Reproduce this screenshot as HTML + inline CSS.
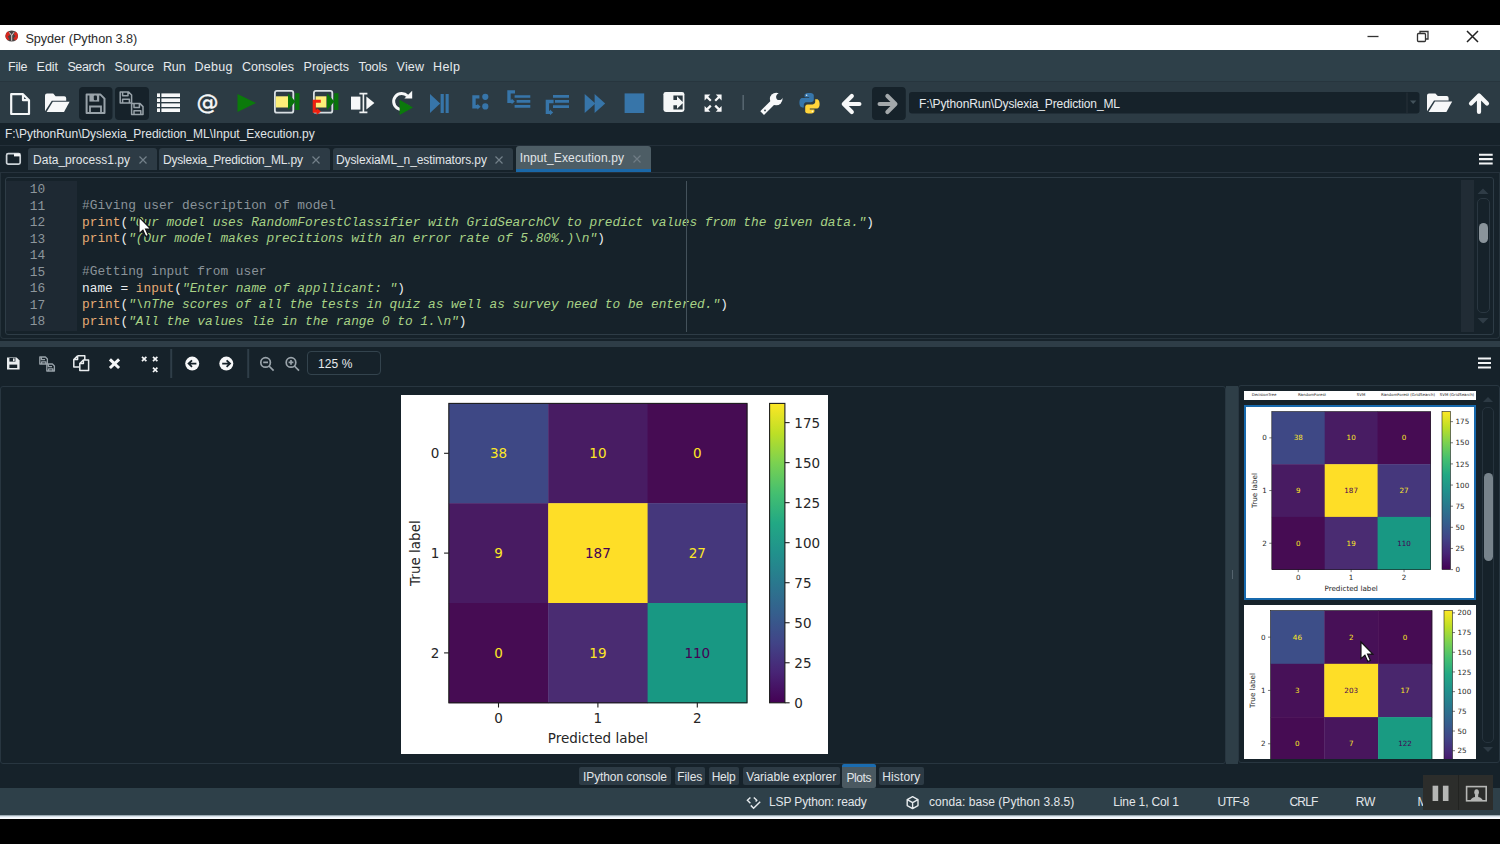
<!DOCTYPE html>
<html>
<head>
<meta charset="utf-8">
<title>Spyder (Python 3.8)</title>
<style>
*{box-sizing:border-box;margin:0;padding:0}
html,body{width:1500px;height:844px;overflow:hidden;background:#000;font-family:"Liberation Sans","DejaVu Sans",sans-serif;}
.abs{position:absolute}
#root{position:absolute;left:0;top:0;width:1500px;height:844px;background:#000;overflow:hidden}
.t{position:absolute;white-space:pre;line-height:16px;height:16px}
#title{left:0;top:25px;width:1500px;height:25px;background:#fff;color:#2b2b2b;font-size:12.7px}
#menu{left:0;top:50px;width:1500px;height:32px;background:#2e4049;color:#e6eaed;font-size:12.5px;border-bottom:1px solid #27353e}
#tool{left:0;top:82px;width:1500px;height:41px;background:#2c3b44}
#path{left:0;top:123px;width:1500px;height:23px;background:#16222a;color:#e0e5e8;font-size:12px}
#tabs{left:0;top:146px;width:1500px;height:30px;background:#16222a}
.tab{position:absolute;top:2px;height:22px;background:#2d3b45;color:#e2e6e9;font-size:12px;border-radius:3px 3px 0 0}
.tab .x{position:absolute;top:5px;width:10px;height:10px}
#editor{left:5px;top:177px;width:1489px;height:158px;background:#16222a;border:1px solid #2e3c46;border-radius:3px}
#gutter{left:0;top:3px;width:71px;height:150px;background:#1e2933}
.ln{position:absolute;left:0;width:39.2px;text-align:right;color:#8d969c;font-family:"Liberation Mono","DejaVu Sans Mono",monospace;font-size:12.8px;white-space:pre;line-height:16px;height:16px}
.code{position:absolute;left:76px;font-family:"Liberation Mono","DejaVu Sans Mono",monospace;font-size:12.82px;white-space:pre;color:#e9edef;line-height:16px;height:16px}
.cm{color:#8a9399}
.fn{color:#e6ab74}
.st{color:#a8d386;font-style:italic}
#split{left:0;top:341px;width:1500px;height:6px;background:#2e3d47}
#ptool{left:0;top:347px;width:1500px;height:38px;background:#16222a}
#plots{left:0;top:385px;width:1500px;height:380px;background:#16222a}
#btabs{left:0;top:765px;width:1500px;height:23px;background:#16222a}
.bt{position:absolute;top:2px;height:18px;background:#2d3b45;color:#e2e6e9;font-size:12px;border-radius:2px}
#status{left:0;top:788px;width:1500px;height:27px;background:#2e4049;color:#e2e6e9;font-size:12px}
#stripe{left:0;top:815px;width:1500px;height:4px;background:linear-gradient(#7f9098,#e9f1f9 45%,#ffffff)}
svg{position:absolute;overflow:visible}
svg text{font-family:"DejaVu Sans","Liberation Sans",sans-serif}
</style>
</head>
<body>
<div id="root">

<div class="abs" style="left:0;top:50px;width:1500px;height:765px;background:#16222a"></div>
<div id="title" class="abs">
<svg style="left:4.8px;top:5.4px" width="13.4" height="12" viewBox="0 0 13.4 12"><ellipse cx="6.7" cy="6" rx="6.3" ry="5.6" fill="#4a4444"/><path d="M0.4 6 A6.3 5.6 0 0 1 3.2 1.3 L5.4 4.6 L2.8 6.4 L4.6 9.6 L2.6 10.3 A6.3 5.6 0 0 1 0.4 6z" fill="#d8281f"/><path d="M13 6 A6.3 5.6 0 0 0 10.6 1.6 L8.6 4.2 L10.6 6 L8.4 8.6 L10.4 10.6 A6.3 5.6 0 0 0 13 6z" fill="#d8281f"/><path d="M4.4 2.4 L6.7 5.6 L9 2.2 M6.7 5.6 V10.8" stroke="#e8e0e0" stroke-width="0.9" fill="none"/></svg>
<span class="t" style="letter-spacing:-0.05px;left:25.4px;top:6px">Spyder (Python 3.8)</span>
<svg style="left:1360px;top:0" width="140" height="25" viewBox="0 0 140 25"><path d="M7.5 11.5 H18.5" stroke="#333" stroke-width="1.3"/><rect x="57.5" y="8.5" width="8" height="8" fill="none" stroke="#333" stroke-width="1.3" rx="1"/><path d="M60 8.5 V6.5 H68 V14 H65.5" fill="none" stroke="#333" stroke-width="1.3"/><path d="M107 6 L118 17 M118 6 L107 17" stroke="#222" stroke-width="1.5"/></svg>
</div>
<div id="menu" class="abs">
<span class="t" style="letter-spacing:-0.19px;left:8px;top:9px">File</span>
<span class="t" style="letter-spacing:-0.05px;left:36.6px;top:9px">Edit</span>
<span class="t" style="letter-spacing:-0.40px;left:67.4px;top:9px">Search</span>
<span class="t" style="letter-spacing:-0.00px;left:114.4px;top:9px">Source</span>
<span class="t" style="letter-spacing:-0.17px;left:163px;top:9px">Run</span>
<span class="t" style="letter-spacing:0.24px;left:194.6px;top:9px">Debug</span>
<span class="t" style="letter-spacing:-0.02px;left:242px;top:9px">Consoles</span>
<span class="t" style="letter-spacing:0.03px;left:303.6px;top:9px">Projects</span>
<span class="t" style="letter-spacing:-0.10px;left:358.6px;top:9px">Tools</span>
<span class="t" style="letter-spacing:0.17px;left:396.6px;top:9px">View</span>
<span class="t" style="letter-spacing:0.43px;left:433px;top:9px">Help</span>
</div>
<div id="tool" class="abs">
<svg style="left:0;top:0" width="1500" height="41" viewBox="0 0 1500 41">
<!-- new file -->
<path d="M11.2 12.2 H23 L29 18.2 V32 H11.2 Z M23 12.2 V18.2 H29" fill="none" stroke="#f4f6f7" stroke-width="2.2" stroke-linejoin="round"/>
<!-- open folder -->
<path d="M45 13.6 q0 -2 2 -2 h6.2 l2.4 2.6 h8.6 q2 0 2 2 v2.6 H51.8 L45 29.2z" fill="#f7f8f9"/>
<path d="M52.8 19.7 H69.6 L64 30 H46.6z" fill="#f7f8f9"/>
<!-- save (disabled) -->
<rect x="79" y="5" width="33.5" height="33" rx="4" fill="#16222a"/>
<path d="M86.6 12.6 H100.5 L104.5 16.6 V31 H86.6 Z" fill="none" stroke="#98a2a9" stroke-width="2" stroke-linejoin="round"/>
<rect x="89.4" y="12.6" width="9.8" height="7" fill="#98a2a9"/><rect x="93.8" y="13.4" width="3.2" height="4.8" rx="1" fill="#16222a"/>
<path d="M90 31 V24.5 H101 V31" fill="none" stroke="#98a2a9" stroke-width="1.8"/>
<!-- save all (disabled) -->
<rect x="115" y="5" width="34" height="33" rx="4" fill="#16222a"/>
<g fill="none" stroke="#98a2a9" stroke-width="1.5" stroke-linejoin="round">
<path d="M120.2 10 H128.6 L131.6 13 V21 H120.2 Z M122.6 10.4 V13.8 H128 V10.4 M122.6 21 V17.2 H129.4 V21"/>
<path d="M131.6 21.6 H140 L143 24.6 V32.6 H131.6 Z M134 22 V25.4 H139.4 V22 M134 32.6 V28.8 H140.8 V32.6"/>
</g>
<!-- list -->
<g fill="#f7f8f9">
<rect x="157" y="11.4" width="3" height="3.6"/><rect x="161.4" y="11.4" width="18.6" height="3.6"/>
<rect x="157" y="16.4" width="3" height="3.6"/><rect x="161.4" y="16.4" width="18.6" height="3.6"/>
<rect x="157" y="21.4" width="3" height="3.6"/><rect x="161.4" y="21.4" width="18.6" height="3.6"/>
<rect x="157" y="26.4" width="3" height="3.6"/><rect x="161.4" y="26.4" width="18.6" height="3.6"/>
</g>
<!-- @ -->
<text x="207.5" y="27.6" font-size="22" fill="#f7f8f9" stroke="#f7f8f9" stroke-width="0.4" text-anchor="middle" style="font-family:'DejaVu Sans','Liberation Sans',sans-serif">@</text>
<!-- run -->
<path d="M237.5 12 L256 21 L237.5 30z" fill="#0b7a0b"/>
<!-- run cell -->
<rect x="274.9" y="8.9" width="18.4" height="21.8" rx="2" fill="none" stroke="#d9dfe3" stroke-width="1.8"/>
<rect x="275.8" y="14.3" width="12.4" height="11.2" fill="#fdef78"/>
<path d="M288 11.2 L295.4 19.6 L288 28z" fill="#08740a"/><rect x="295.2" y="11.2" width="4.2" height="16.8" fill="#08740a"/>
<!-- run cell and advance -->
<rect x="313.9" y="8.9" width="18.4" height="21.8" rx="2" fill="none" stroke="#d9dfe3" stroke-width="1.8"/>
<rect x="315.6" y="14.3" width="10.8" height="11.2" fill="#fdef78"/>
<path d="M327 11.2 L334.4 19.6 L327 28z" fill="#08740a"/><rect x="334.2" y="11.2" width="4.2" height="16.8" fill="#08740a"/>
<path d="M320.8 19.2 H314.2 V29.2 H318" fill="none" stroke="#f0200f" stroke-width="3"/>
<path d="M316.6 26 L321 29.4 L316.6 33z" fill="#f0200f"/>
<!-- run selection -->
<rect x="351" y="14.6" width="9.4" height="13" fill="#f7f8f9"/>
<path d="M359.4 11.6 H367.4 M359.4 30.4 H367.4 M363.4 11.6 V30.4" stroke="#f0f2f3" stroke-width="1.6"/>
<path d="M366.4 14.6 L374.4 21 L366.4 27.6z" fill="#f7f8f9"/>
<!-- re-run -->
<path d="M407.5 14 A8 8 0 1 0 408.6 23.5" fill="none" stroke="#f7f8f9" stroke-width="3"/>
<path d="M404.4 16.6 H412.2 V8.8z" fill="#f7f8f9"/>
<path d="M399.6 17.8 L413 25.4 L399.6 33z" fill="#0b7a0b"/>
<!-- debug -->
<g fill="#3775a9">
<path d="M430 12 L440.2 21.5 L430 31z"/><rect x="440.6" y="12" width="3.2" height="19"/><rect x="445.6" y="12" width="3.1" height="19"/>
<!-- step -->
<circle cx="485.3" cy="14.8" r="3.1"/><circle cx="485.3" cy="24.4" r="3.1"/>
<path d="M477.4 21.8 L480.6 24.7 L477.4 27.6z"/>
<!-- continue -->
<path d="M584.7 12 L595.4 21.5 L584.7 31z"/><path d="M594.6 12 L605.2 21.5 L594.6 31z"/>
<!-- stop -->
<rect x="624.6" y="11.4" width="19.6" height="19.6"/>
<!-- step in arrowhead -->
<path d="M511.6 16.6 L514.8 19.4 L511.6 22.2z"/>
<!-- step out arrowhead -->
<path d="M550 27.6 L553.2 30.4 L550 33.2z"/>
</g>
<g fill="none" stroke="#3775a9" stroke-width="3.4">
<path d="M479.4 14.9 H474 V24.7 H478"/>
<path d="M515 9.9 H509 V19.4 H512"/>
<path d="M553.6 19.5 H547.4 V30.4 H550.4"/>
<path d="M514.6 14.5 H530.3 M516.6 19.3 H530.3 M514.6 24.4 H530.3" stroke-width="2.7"/>
<path d="M553 14.3 H569 M555 19.3 H569 M553 24.6 H569" stroke-width="2.7"/>
</g>
<!-- maximize pane -->
<rect x="663.4" y="9.9" width="21" height="20" rx="2.4" fill="#f4f6f7"/>
<path d="M673.4 13.6 H682.7 V20 L677 14.3 V18 H673.4z M673.4 27.4 H682.7 V21.2 L677 26.8 V23.2 H673.4z" fill="#2a3840"/>
<!-- fullscreen -->
<g stroke="#f7f8f9" stroke-width="2.2" fill="#f7f8f9" stroke-linejoin="miter">
<path d="M706 14 L710.8 18.8 M720 14 L715.2 18.8 M706 28.4 L710.8 23.6 M720 28.4 L715.2 23.6" fill="none"/>
<path d="M704.6 12.6 H710.4 L704.6 18.4z M721.6 12.6 H715.8 L721.6 18.4z M704.6 29.8 H710.4 L704.6 24z M721.6 29.8 H715.8 L721.6 24z" stroke="none"/>
</g>
<!-- separator -->
<path d="M743.2 13 V28" stroke="#55646e" stroke-width="1.6"/>
<!-- wrench -->
<path d="M764 29.2 L772.8 20.4" stroke="#f7f8f9" stroke-width="5.2" stroke-linecap="square"/>
<circle cx="776.2" cy="17" r="6.3" fill="#f7f8f9"/>
<circle cx="779.2" cy="15" r="3.1" fill="#2c3b44"/>
<path d="M777 12.8 L781.4 17.2 L786 12.6 L781.6 8.2z" fill="#2c3b44"/>
<circle cx="765" cy="28.4" r="0.9" fill="#2c3b44"/>
<!-- python -->
<path d="M809 11 c-4.6 0 -4.4 2 -4.4 2 v2.2 h4.6 v0.8 h-6.6 s-3.2 -0.4 -3.2 4.6 s2.8 4.8 2.8 4.8 h1.6 v-2.4 s-0.1 -2.8 2.8 -2.8 h4.6 s2.6 0 2.6 -2.6 v-4.2 s0.4 -2.4 -4.8 -2.4z" fill="#3776ab"/>
<path d="M810 31.6 c4.6 0 4.4 -2 4.4 -2 v-2.2 h-4.6 v-0.8 h6.6 s3.2 0.4 3.2 -4.6 s-2.8 -4.8 -2.8 -4.8 h-1.6 v2.4 s0.1 2.8 -2.8 2.8 h-4.6 s-2.6 0 -2.6 2.6 v4.2 s-0.4 2.4 4.8 2.4z" fill="#ffd43b"/>
<circle cx="806.6" cy="13.2" r="0.8" fill="#e6eef5"/><circle cx="812.4" cy="29.4" r="0.8" fill="#fff6d0"/>
<!-- back -->
<path d="M859.4 22 H845 M851.8 14 L843.8 22 L851.8 30" fill="none" stroke="#f7f8f9" stroke-width="4.2" stroke-linecap="round" stroke-linejoin="round"/>
<!-- forward (disabled) -->
<rect x="872" y="5" width="33.8" height="33" rx="4" fill="#16222a"/>
<path d="M879.6 22 H894 M887.4 14 L895.4 22 L887.4 30" fill="none" stroke="#a3a8ab" stroke-width="4.2" stroke-linecap="round" stroke-linejoin="round"/>
<!-- combobox -->
<rect x="909" y="10" width="510.5" height="21.6" rx="3" fill="#16222a"/>
<path d="M1407 10.5 V31" stroke="#263139" stroke-width="1"/>
<path d="M1410 18.4 H1416.4 L1413.2 22z" fill="#43525b"/>
<text x="919" y="26" font-size="12" fill="#e6eaed" textLength="201" lengthAdjust="spacing" style="font-family:'Liberation Sans',sans-serif">F:\PythonRun\Dyslexia_Prediction_ML</text>
<!-- folder -->
<path d="M1427 13.4 q0 -2 2 -2 h6.4 l2.4 2.6 h8.8 q2 0 2 2 v2.6 H1434 L1427 29.2z" fill="#f7f8f9"/>
<path d="M1435 19.5 H1452.2 L1446.4 30 H1428.6z" fill="#f7f8f9"/>
<!-- up -->
<path d="M1479 30 V15 M1471 21.6 L1479 13.6 L1487 21.6" fill="none" stroke="#f7f8f9" stroke-width="4.2" stroke-linecap="round" stroke-linejoin="round"/>
</svg>

</div>
<div id="path" class="abs"><span class="t" style="letter-spacing:-0.02px;left:5px;top:3px">F:\PythonRun\Dyslexia_Prediction_ML\Input_Execution.py</span></div>
<div id="tabs" class="abs">
<svg style="left:4px;top:6px" width="20" height="14" viewBox="0 0 20 14"><rect x="2.6" y="1.6" width="13.6" height="10.6" rx="1.6" fill="none" stroke="#ccd3d8" stroke-width="1.7"/><path d="M10 1.6 h6 v2.8 h-6z" fill="#f4f6f7"/></svg>
<div class="tab" style="left:28px;width:129px"><span class="t" style="letter-spacing:0.02px;left:5px;top:4px">Data_process1.py</span><svg class="x" style="left:110px;top:6.5px" viewBox="0 0 10 10"><path d="M1.5 1.5 L8.5 8.5 M8.5 1.5 L1.5 8.5" stroke="#73808a" stroke-width="1.2"/></svg></div>
<div class="tab" style="left:159px;width:171px"><span class="t" style="letter-spacing:-0.20px;left:4px;top:4px">Dyslexia_Prediction_ML.py</span><svg class="x" style="left:152px;top:6.5px" viewBox="0 0 10 10"><path d="M1.5 1.5 L8.5 8.5 M8.5 1.5 L1.5 8.5" stroke="#73808a" stroke-width="1.2"/></svg></div>
<div class="tab" style="left:333px;width:180px"><span class="t" style="letter-spacing:-0.10px;left:3px;top:4px">DyslexiaML_n_estimators.py</span><svg class="x" style="left:161px;top:6.5px" viewBox="0 0 10 10"><path d="M1.5 1.5 L8.5 8.5 M8.5 1.5 L1.5 8.5" stroke="#73808a" stroke-width="1.2"/></svg></div>
<div class="tab" style="left:516px;width:135px;top:0;height:26px;background:#4d5d65;border-bottom:3px solid #1a68a8"><span class="t" style="letter-spacing:0.13px;left:3.7000000000000455px;top:4px">Input_Execution.py</span><svg class="x" style="left:116px;top:8px" viewBox="0 0 10 10"><path d="M1.5 1.5 L8.5 8.5 M8.5 1.5 L1.5 8.5" stroke="#6f7c85" stroke-width="1.2"/></svg></div>
<svg style="left:1478px;top:7px" width="16" height="12" viewBox="0 0 16 12"><path d="M1 1.7 H14.7 M1 6.1 H14.7 M1 10.5 H14.7" stroke="#f2f4f5" stroke-width="2.1"/></svg>
<div class="abs" style="left:0;top:-1px;width:1500px;height:1px;background:#232f39"></div>
<div class="abs" style="left:0;top:26px;width:1500px;height:1px;background:#26323c"></div>
</div>
<div class="abs" style="left:0;top:172px;width:1500px;height:167px;border:1px solid #25323b;border-top:none;border-radius:0 0 4px 4px"></div>
<div id="editor" class="abs"><div id="gutter" class="abs"></div>
<div class="ln" style="top:4.0px">10</div><div class="code" style="top:3.5px"></div>
<div class="ln" style="top:20.5px">11</div><div class="code" style="top:20.0px"><span class="cm">#Giving user description of model</span></div>
<div class="ln" style="top:37.0px">12</div><div class="code" style="top:36.5px"><span class="fn">print</span>(<span class="st">"Our model uses RandomForestClassifier with GridSearchCV to predict values from the given data."</span>)</div>
<div class="ln" style="top:53.5px">13</div><div class="code" style="top:53.0px"><span class="fn">print</span>(<span class="st">"(Our model makes precitions with an error rate of 5.80%.)\n"</span>)</div>
<div class="ln" style="top:70.0px">14</div><div class="code" style="top:69.5px"></div>
<div class="ln" style="top:86.5px">15</div><div class="code" style="top:86.0px"><span class="cm">#Getting input from user</span></div>
<div class="ln" style="top:103.0px">16</div><div class="code" style="top:102.5px">name = <span class="fn">input</span>(<span class="st">"Enter name of appllicant: "</span>)</div>
<div class="ln" style="top:119.5px">17</div><div class="code" style="top:119.0px"><span class="fn">print</span>(<span class="st">"\nThe scores of all the tests in quiz as well as survey need to be entered."</span>)</div>
<div class="ln" style="top:136.0px">18</div><div class="code" style="top:135.5px"><span class="fn">print</span>(<span class="st">"All the values lie in the range 0 to 1.\n"</span>)</div>
<div class="abs" style="left:680px;top:3px;width:1.2px;height:151px;background:#44525b"></div>
<div class="abs" style="left:1454.5px;top:2px;width:13px;height:152px;background:#212c35"></div>
<div class="abs" style="left:1470.5px;top:19.7px;width:13.5px;height:115.6px;border:1px solid #2a3741;border-radius:5px"></div>
<div class="abs" style="left:1472.6px;top:45.3px;width:9.6px;height:19.7px;background:#8a949b;border-radius:4.5px"></div>
<svg style="left:1471.3px;top:9px" width="12" height="8" viewBox="0 0 12 8"><path d="M0.5 7 L6 1.5 L11.5 7z" fill="#2f3c46"/></svg>
<svg style="left:1471.3px;top:139px" width="12" height="8" viewBox="0 0 12 8"><path d="M0.5 1 L6 6.5 L11.5 1z" fill="#2f3c46"/></svg>
</div>
<div id="split" class="abs"></div>
<div id="ptool" class="abs">
<svg style="left:0;top:0" width="1500" height="38" viewBox="0 347 1500 38">
<!-- save -->
<path d="M7 357.6 H16.6 L19.6 360.6 V369.6 H7Z" fill="#e9edef"/>
<rect x="9.4" y="358" width="6" height="3.6" fill="#16222a"/><rect x="13" y="358.4" width="1.6" height="2.8" fill="#e9edef"/>
<rect x="9.4" y="364.6" width="7.8" height="3.4" fill="#16222a"/>
<!-- save all (disabled) -->
<g fill="none" stroke="#98a2a9" stroke-width="1.3" stroke-linejoin="round">
<path d="M39.8 357 H45.4 L47.4 359 V364 H39.8Z M41.4 357.4 V359.6 H45 M41.6 364 V361.8 H45.8 V364"/>
<path d="M46.8 364 H52.4 L54.4 366 V371 H46.8Z M48.4 364.4 V366.6 H52 M48.6 371 V368.8 H52.8 V371"/>
</g>
<!-- copy -->
<g fill="none" stroke="#e9edef" stroke-width="1.5" stroke-linejoin="round">
<path d="M77.6 355.8 H84.8 V360 M77.6 355.8 L73.8 359.6 V367 H79.4 M73.8 359.6 H77.6 V355.8"/>
<path d="M83.4 360 H88.6 V370.6 H79.8 V363.6 Z" fill="#16222a"/>
<path d="M79.8 363.6 H83.4 V360"/>
</g>
<!-- x -->
<path d="M111 360.4 L118 367 M118 360.4 L111 367" stroke="#f4f6f7" stroke-width="3" stroke-linecap="square"/>
<!-- xxx -->
<path d="M142 356.8 L146.4 361.2 M146.4 356.8 L142 361.2 M153 356.8 L157.4 361.2 M157.4 356.8 L153 361.2 M153 367.6 L157.4 372 M157.4 367.6 L153 372" stroke="#f4f6f7" stroke-width="1.7"/>
<!-- sep -->
<path d="M171.2 349 V378 M248.2 349 V378" stroke="#2f3e48" stroke-width="2"/>
<!-- back/forward circles -->
<circle cx="192.2" cy="363.6" r="7" fill="#f7f8f9"/>
<path d="M196.4 363.6 H189.2 M192 360.4 L188.6 363.6 L192 366.8" fill="none" stroke="#16222a" stroke-width="1.8"/>
<circle cx="226.3" cy="363.6" r="7" fill="#f7f8f9"/>
<path d="M222.2 363.6 H229.4 M226.6 360.4 L230 363.6 L226.6 366.8" fill="none" stroke="#16222a" stroke-width="1.8"/>
<!-- zoom out / in -->
<g fill="none" stroke="#9aa4ab" stroke-width="1.7">
<circle cx="265.6" cy="362.4" r="4.8"/><path d="M269 366 L273.6 370.6 M263.2 362.4 H268"/>
<circle cx="291" cy="362.4" r="4.8"/><path d="M294.4 366 L299 370.6 M288.6 362.4 H293.4 M291 360 V364.8"/>
</g>
</svg>

<div class="abs" style="left:306.5px;top:4px;width:74.5px;height:24px;border:1px solid #33434d;border-radius:4px"></div>
<span class="t" style="letter-spacing:0.12px;left:318px;top:9px;font-size:12px;color:#e6eaed">125 %</span>
<svg style="left:1477px;top:10px" width="16" height="12" viewBox="0 0 16 12"><path d="M1 1.5 H14 M1 6 H14 M1 10.5 H14" stroke="#f2f4f5" stroke-width="2.2"/></svg>
</div>
<div id="plots" class="abs">
<div class="abs" style="left:0;top:1px;width:1226px;height:378px;background:#16222a;border:1px solid #283640;border-radius:3px"></div>
<div class="abs" style="left:401px;top:10px;width:427px;height:359px;background:#fff"></div>
<svg style="left:0;top:0" width="1231" height="380" viewBox="0 385 1231 380">
<rect x="448.80" y="403.40" width="99.80" height="100.20" fill="#3e4885"/>
<rect x="548.20" y="403.40" width="99.80" height="100.20" fill="#481c63"/>
<rect x="647.60" y="403.40" width="99.80" height="100.20" fill="#460c53"/>
<rect x="448.80" y="503.20" width="99.80" height="100.20" fill="#481b62"/>
<rect x="548.20" y="503.20" width="99.80" height="100.20" fill="#fede27"/>
<rect x="647.60" y="503.20" width="99.80" height="100.20" fill="#45377c"/>
<rect x="448.80" y="603.00" width="99.80" height="100.20" fill="#460c53"/>
<rect x="548.20" y="603.00" width="99.80" height="100.20" fill="#4a2c72"/>
<rect x="647.60" y="603.00" width="99.80" height="100.20" fill="#189883"/>
<text x="498.50" y="458.22" font-size="13.5" fill="#fde725" text-anchor="middle">38</text>
<text x="597.90" y="458.22" font-size="13.5" fill="#fde725" text-anchor="middle">10</text>
<text x="697.30" y="458.22" font-size="13.5" fill="#fde725" text-anchor="middle">0</text>
<text x="498.50" y="558.02" font-size="13.5" fill="#fde725" text-anchor="middle">9</text>
<text x="597.90" y="558.02" font-size="13.5" fill="#440154" text-anchor="middle">187</text>
<text x="697.30" y="558.02" font-size="13.5" fill="#fde725" text-anchor="middle">27</text>
<text x="498.50" y="657.82" font-size="13.5" fill="#fde725" text-anchor="middle">0</text>
<text x="597.90" y="657.82" font-size="13.5" fill="#fde725" text-anchor="middle">19</text>
<text x="697.30" y="657.82" font-size="13.5" fill="#440154" text-anchor="middle">110</text>
<rect x="448.80" y="403.40" width="298.20" height="299.40" fill="none" stroke="#1a1a1a" stroke-width="1.08"/>
<path d="M444.07 453.30 H448.80" stroke="#1a1a1a" stroke-width="1.08"/>
<text x="439.35" y="458.22" font-size="13.5" fill="#262626" text-anchor="end">0</text>
<path d="M498.50 702.80 V707.52" stroke="#1a1a1a" stroke-width="1.08"/>
<text x="498.50" y="723.17" font-size="13.5" fill="#262626" text-anchor="middle">0</text>
<path d="M444.07 553.10 H448.80" stroke="#1a1a1a" stroke-width="1.08"/>
<text x="439.35" y="558.02" font-size="13.5" fill="#262626" text-anchor="end">1</text>
<path d="M597.90 702.80 V707.52" stroke="#1a1a1a" stroke-width="1.08"/>
<text x="597.90" y="723.17" font-size="13.5" fill="#262626" text-anchor="middle">1</text>
<path d="M444.07 652.90 H448.80" stroke="#1a1a1a" stroke-width="1.08"/>
<text x="439.35" y="657.82" font-size="13.5" fill="#262626" text-anchor="end">2</text>
<path d="M697.30 702.80 V707.52" stroke="#1a1a1a" stroke-width="1.08"/>
<text x="697.30" y="723.17" font-size="13.5" fill="#262626" text-anchor="middle">2</text>
<text x="597.90" y="742.89" font-size="13.5" fill="#262626" text-anchor="middle">Predicted label</text>
<text transform="translate(420.45,553.10) rotate(-90)" font-size="13.5" fill="#262626" text-anchor="middle">True label</text>
<defs><linearGradient id="g448_403" x1="0" y1="1" x2="0" y2="0"><stop offset="0%" stop-color="#440154"/><stop offset="10%" stop-color="#482475"/><stop offset="20%" stop-color="#414487"/><stop offset="30%" stop-color="#355f8d"/><stop offset="40%" stop-color="#2a788e"/><stop offset="50%" stop-color="#21918c"/><stop offset="60%" stop-color="#22a884"/><stop offset="70%" stop-color="#44bf70"/><stop offset="80%" stop-color="#7ad151"/><stop offset="90%" stop-color="#bddf26"/><stop offset="100%" stop-color="#fde725"/></linearGradient></defs>
<rect x="769.60" y="403.40" width="15.30" height="299.40" fill="url(#g448_403)" stroke="#1a1a1a" stroke-width="1.08"/>
<path d="M784.90 702.80 h4.73" stroke="#1a1a1a" stroke-width="1.08"/>
<text x="794.35" y="707.72" font-size="13.5" fill="#262626">0</text>
<path d="M784.90 662.77 h4.73" stroke="#1a1a1a" stroke-width="1.08"/>
<text x="794.35" y="667.69" font-size="13.5" fill="#262626">25</text>
<path d="M784.90 622.75 h4.73" stroke="#1a1a1a" stroke-width="1.08"/>
<text x="794.35" y="627.67" font-size="13.5" fill="#262626">50</text>
<path d="M784.90 582.72 h4.73" stroke="#1a1a1a" stroke-width="1.08"/>
<text x="794.35" y="587.64" font-size="13.5" fill="#262626">75</text>
<path d="M784.90 542.69 h4.73" stroke="#1a1a1a" stroke-width="1.08"/>
<text x="794.35" y="547.61" font-size="13.5" fill="#262626">100</text>
<path d="M784.90 502.67 h4.73" stroke="#1a1a1a" stroke-width="1.08"/>
<text x="794.35" y="507.59" font-size="13.5" fill="#262626">125</text>
<path d="M784.90 462.64 h4.73" stroke="#1a1a1a" stroke-width="1.08"/>
<text x="794.35" y="467.56" font-size="13.5" fill="#262626">150</text>
<path d="M784.90 422.61 h4.73" stroke="#1a1a1a" stroke-width="1.08"/>
<text x="794.35" y="427.53" font-size="13.5" fill="#262626">175</text>
</svg>
<div class="abs" style="left:1226.4px;top:1px;width:11.6px;height:378px;background:#2e3e47"></div>
<div class="abs" style="left:1231.6px;top:185px;width:1.4px;height:9px;background:#55646e"></div>
<div class="abs" style="left:1238px;top:0;width:262px;height:378px;background:#16222a;border:1px solid #283640;border-radius:3px"></div>
<div class="abs" style="left:1244px;top:5.5px;width:232px;height:9px;background:#fff"></div>
<div class="abs" style="left:1244px;top:20px;width:232px;height:195px;background:#fff;border:2.5px solid #1769ad"></div>
<div class="abs" style="left:1244px;top:220px;width:232px;height:154px;background:#fff;overflow:hidden"></div>
<svg style="left:1238px;top:0" width="262" height="380" viewBox="1238 385 262 380">
<text x="1264" y="396" font-size="3.9" fill="#222" text-anchor="middle">DecisionTree</text>
<text x="1312" y="396" font-size="3.9" fill="#222" text-anchor="middle">RandomForest</text>
<text x="1361" y="396" font-size="3.9" fill="#222" text-anchor="middle">SVM</text>
<text x="1408" y="396" font-size="3.9" fill="#222" text-anchor="middle">RandomForest (GridSearch)</text>
<text x="1457" y="396" font-size="3.9" fill="#222" text-anchor="middle">SVM (GridSearch)</text>
<rect x="1271.80" y="411.50" width="53.30" height="53.10" fill="#3e4885"/>
<rect x="1324.70" y="411.50" width="53.30" height="53.10" fill="#481c63"/>
<rect x="1377.60" y="411.50" width="53.30" height="53.10" fill="#460c53"/>
<rect x="1271.80" y="464.20" width="53.30" height="53.10" fill="#481b62"/>
<rect x="1324.70" y="464.20" width="53.30" height="53.10" fill="#fede27"/>
<rect x="1377.60" y="464.20" width="53.30" height="53.10" fill="#45377c"/>
<rect x="1271.80" y="516.90" width="53.30" height="53.10" fill="#460c53"/>
<rect x="1324.70" y="516.90" width="53.30" height="53.10" fill="#4a2c72"/>
<rect x="1377.60" y="516.90" width="53.30" height="53.10" fill="#189883"/>
<text x="1298.25" y="440.47" font-size="7.2" fill="#fde725" text-anchor="middle">38</text>
<text x="1351.15" y="440.47" font-size="7.2" fill="#fde725" text-anchor="middle">10</text>
<text x="1404.05" y="440.47" font-size="7.2" fill="#fde725" text-anchor="middle">0</text>
<text x="1298.25" y="493.17" font-size="7.2" fill="#fde725" text-anchor="middle">9</text>
<text x="1351.15" y="493.17" font-size="7.2" fill="#440154" text-anchor="middle">187</text>
<text x="1404.05" y="493.17" font-size="7.2" fill="#fde725" text-anchor="middle">27</text>
<text x="1298.25" y="545.87" font-size="7.2" fill="#fde725" text-anchor="middle">0</text>
<text x="1351.15" y="545.87" font-size="7.2" fill="#fde725" text-anchor="middle">19</text>
<text x="1404.05" y="545.87" font-size="7.2" fill="#440154" text-anchor="middle">110</text>
<rect x="1271.80" y="411.50" width="158.70" height="158.10" fill="none" stroke="#1a1a1a" stroke-width="0.58"/>
<path d="M1269.28 437.85 H1271.80" stroke="#1a1a1a" stroke-width="0.58"/>
<text x="1266.76" y="440.47" font-size="7.2" fill="#262626" text-anchor="end">0</text>
<path d="M1298.25 569.60 V572.12" stroke="#1a1a1a" stroke-width="0.58"/>
<text x="1298.25" y="580.46" font-size="7.2" fill="#262626" text-anchor="middle">0</text>
<path d="M1269.28 490.55 H1271.80" stroke="#1a1a1a" stroke-width="0.58"/>
<text x="1266.76" y="493.17" font-size="7.2" fill="#262626" text-anchor="end">1</text>
<path d="M1351.15 569.60 V572.12" stroke="#1a1a1a" stroke-width="0.58"/>
<text x="1351.15" y="580.46" font-size="7.2" fill="#262626" text-anchor="middle">1</text>
<path d="M1269.28 543.25 H1271.80" stroke="#1a1a1a" stroke-width="0.58"/>
<text x="1266.76" y="545.87" font-size="7.2" fill="#262626" text-anchor="end">2</text>
<path d="M1404.05 569.60 V572.12" stroke="#1a1a1a" stroke-width="0.58"/>
<text x="1404.05" y="580.46" font-size="7.2" fill="#262626" text-anchor="middle">2</text>
<text x="1351.15" y="590.98" font-size="7.2" fill="#262626" text-anchor="middle">Predicted label</text>
<text transform="translate(1256.68,490.55) rotate(-90)" font-size="7.2" fill="#262626" text-anchor="middle">True label</text>
<defs><linearGradient id="g1271_411" x1="0" y1="1" x2="0" y2="0"><stop offset="0%" stop-color="#440154"/><stop offset="10%" stop-color="#482475"/><stop offset="20%" stop-color="#414487"/><stop offset="30%" stop-color="#355f8d"/><stop offset="40%" stop-color="#2a788e"/><stop offset="50%" stop-color="#21918c"/><stop offset="60%" stop-color="#22a884"/><stop offset="70%" stop-color="#44bf70"/><stop offset="80%" stop-color="#7ad151"/><stop offset="90%" stop-color="#bddf26"/><stop offset="100%" stop-color="#fde725"/></linearGradient></defs>
<rect x="1442.00" y="411.50" width="8.50" height="158.10" fill="url(#g1271_411)" stroke="#1a1a1a" stroke-width="0.58"/>
<path d="M1450.50 569.60 h2.52" stroke="#1a1a1a" stroke-width="0.58"/>
<text x="1455.54" y="572.22" font-size="7.2" fill="#262626">0</text>
<path d="M1450.50 548.46 h2.52" stroke="#1a1a1a" stroke-width="0.58"/>
<text x="1455.54" y="551.09" font-size="7.2" fill="#262626">25</text>
<path d="M1450.50 527.33 h2.52" stroke="#1a1a1a" stroke-width="0.58"/>
<text x="1455.54" y="529.95" font-size="7.2" fill="#262626">50</text>
<path d="M1450.50 506.19 h2.52" stroke="#1a1a1a" stroke-width="0.58"/>
<text x="1455.54" y="508.82" font-size="7.2" fill="#262626">75</text>
<path d="M1450.50 485.05 h2.52" stroke="#1a1a1a" stroke-width="0.58"/>
<text x="1455.54" y="487.68" font-size="7.2" fill="#262626">100</text>
<path d="M1450.50 463.92 h2.52" stroke="#1a1a1a" stroke-width="0.58"/>
<text x="1455.54" y="466.54" font-size="7.2" fill="#262626">125</text>
<path d="M1450.50 442.78 h2.52" stroke="#1a1a1a" stroke-width="0.58"/>
<text x="1455.54" y="445.41" font-size="7.2" fill="#262626">150</text>
<path d="M1450.50 421.65 h2.52" stroke="#1a1a1a" stroke-width="0.58"/>
<text x="1455.54" y="424.27" font-size="7.2" fill="#262626">175</text>
<clipPath id="clip2"><rect x="1244" y="605" width="232" height="154"/></clipPath><g clip-path="url(#clip2)">
<rect x="1270.50" y="610.50" width="54.20" height="53.70" fill="#3d4e88"/>
<rect x="1324.30" y="610.50" width="54.20" height="53.70" fill="#471057"/>
<rect x="1378.10" y="610.50" width="54.20" height="53.70" fill="#460c53"/>
<rect x="1270.50" y="663.80" width="54.20" height="53.70" fill="#471158"/>
<rect x="1324.30" y="663.80" width="54.20" height="53.70" fill="#fede27"/>
<rect x="1378.10" y="663.80" width="54.20" height="53.70" fill="#49266d"/>
<rect x="1270.50" y="717.10" width="54.20" height="53.70" fill="#460c53"/>
<rect x="1324.30" y="717.10" width="54.20" height="53.70" fill="#48165d"/>
<rect x="1378.10" y="717.10" width="54.20" height="53.70" fill="#199b82"/>
<text x="1297.40" y="639.77" font-size="7.2" fill="#fde725" text-anchor="middle">46</text>
<text x="1351.20" y="639.77" font-size="7.2" fill="#fde725" text-anchor="middle">2</text>
<text x="1405.00" y="639.77" font-size="7.2" fill="#fde725" text-anchor="middle">0</text>
<text x="1297.40" y="693.07" font-size="7.2" fill="#fde725" text-anchor="middle">3</text>
<text x="1351.20" y="693.07" font-size="7.2" fill="#440154" text-anchor="middle">203</text>
<text x="1405.00" y="693.07" font-size="7.2" fill="#fde725" text-anchor="middle">17</text>
<text x="1297.40" y="746.37" font-size="7.2" fill="#fde725" text-anchor="middle">0</text>
<text x="1351.20" y="746.37" font-size="7.2" fill="#fde725" text-anchor="middle">7</text>
<text x="1405.00" y="746.37" font-size="7.2" fill="#440154" text-anchor="middle">122</text>
<rect x="1270.50" y="610.50" width="161.40" height="159.90" fill="none" stroke="#1a1a1a" stroke-width="0.58"/>
<path d="M1267.98 637.15 H1270.50" stroke="#1a1a1a" stroke-width="0.58"/>
<text x="1265.46" y="639.77" font-size="7.2" fill="#262626" text-anchor="end">0</text>
<path d="M1297.40 770.40 V772.92" stroke="#1a1a1a" stroke-width="0.58"/>
<text x="1297.40" y="781.26" font-size="7.2" fill="#262626" text-anchor="middle">0</text>
<path d="M1267.98 690.45 H1270.50" stroke="#1a1a1a" stroke-width="0.58"/>
<text x="1265.46" y="693.07" font-size="7.2" fill="#262626" text-anchor="end">1</text>
<path d="M1351.20 770.40 V772.92" stroke="#1a1a1a" stroke-width="0.58"/>
<text x="1351.20" y="781.26" font-size="7.2" fill="#262626" text-anchor="middle">1</text>
<path d="M1267.98 743.75 H1270.50" stroke="#1a1a1a" stroke-width="0.58"/>
<text x="1265.46" y="746.37" font-size="7.2" fill="#262626" text-anchor="end">2</text>
<path d="M1405.00 770.40 V772.92" stroke="#1a1a1a" stroke-width="0.58"/>
<text x="1405.00" y="781.26" font-size="7.2" fill="#262626" text-anchor="middle">2</text>
<text x="1351.20" y="791.78" font-size="7.2" fill="#262626" text-anchor="middle">Predicted label</text>
<text transform="translate(1255.38,690.45) rotate(-90)" font-size="7.2" fill="#262626" text-anchor="middle">True label</text>
<defs><linearGradient id="g1270_610" x1="0" y1="1" x2="0" y2="0"><stop offset="0%" stop-color="#440154"/><stop offset="10%" stop-color="#482475"/><stop offset="20%" stop-color="#414487"/><stop offset="30%" stop-color="#355f8d"/><stop offset="40%" stop-color="#2a788e"/><stop offset="50%" stop-color="#21918c"/><stop offset="60%" stop-color="#22a884"/><stop offset="70%" stop-color="#44bf70"/><stop offset="80%" stop-color="#7ad151"/><stop offset="90%" stop-color="#bddf26"/><stop offset="100%" stop-color="#fde725"/></linearGradient></defs>
<rect x="1444.00" y="610.50" width="8.50" height="159.90" fill="url(#g1270_610)" stroke="#1a1a1a" stroke-width="0.58"/>
<path d="M1452.50 770.40 h2.52" stroke="#1a1a1a" stroke-width="0.58"/>
<text x="1457.54" y="773.02" font-size="7.2" fill="#262626">0</text>
<path d="M1452.50 750.71 h2.52" stroke="#1a1a1a" stroke-width="0.58"/>
<text x="1457.54" y="753.33" font-size="7.2" fill="#262626">25</text>
<path d="M1452.50 731.02 h2.52" stroke="#1a1a1a" stroke-width="0.58"/>
<text x="1457.54" y="733.64" font-size="7.2" fill="#262626">50</text>
<path d="M1452.50 711.32 h2.52" stroke="#1a1a1a" stroke-width="0.58"/>
<text x="1457.54" y="713.95" font-size="7.2" fill="#262626">75</text>
<path d="M1452.50 691.63 h2.52" stroke="#1a1a1a" stroke-width="0.58"/>
<text x="1457.54" y="694.26" font-size="7.2" fill="#262626">100</text>
<path d="M1452.50 671.94 h2.52" stroke="#1a1a1a" stroke-width="0.58"/>
<text x="1457.54" y="674.56" font-size="7.2" fill="#262626">125</text>
<path d="M1452.50 652.25 h2.52" stroke="#1a1a1a" stroke-width="0.58"/>
<text x="1457.54" y="654.87" font-size="7.2" fill="#262626">150</text>
<path d="M1452.50 632.56 h2.52" stroke="#1a1a1a" stroke-width="0.58"/>
<text x="1457.54" y="635.18" font-size="7.2" fill="#262626">175</text>
<path d="M1452.50 612.86 h2.52" stroke="#1a1a1a" stroke-width="0.58"/>
<text x="1457.54" y="615.49" font-size="7.2" fill="#262626">200</text>
</g>
</svg>
<div class="abs" style="left:1482px;top:22px;width:12px;height:336px;border:1px solid #26333d;border-radius:5px"></div>
<div class="abs" style="left:1483.5px;top:88px;width:9px;height:88px;background:#77838b;border-radius:4.5px"></div>
<svg style="left:1482px;top:10px" width="12" height="8" viewBox="0 0 12 8"><path d="M1 7 L6 2 L11 7z" fill="#2d3a44"/></svg>
<svg style="left:1482px;top:361px" width="12" height="8" viewBox="0 0 12 8"><path d="M1 1 L6 6 L11 1z" fill="#2d3a44"/></svg>
</div>
<div id="btabs" class="abs">
<div class="bt" style="left:579px;width:92px"><span class="t" style="letter-spacing:-0.10px;left:4.0px;top:1.6px">IPython console</span></div>
<div class="bt" style="left:674.7px;width:30.299999999999955px"><span class="t" style="letter-spacing:-0.09px;left:2.6px;top:1.6px">Files</span></div>
<div class="bt" style="left:708.5px;width:30.5px"><span class="t" style="letter-spacing:-0.23px;left:3.2px;top:1.6px">Help</span></div>
<div class="bt" style="left:742.7px;width:97.29999999999995px"><span class="t" style="letter-spacing:0.01px;left:3.6px;top:1.6px">Variable explorer</span></div>
<div class="bt" style="left:842px;width:34px;top:-1.5px;height:24.2px;background:#4a5961;border-top:3.5px solid #1a6cb0"><span class="t" style="letter-spacing:-0.42px;left:4.5px;top:3.2px">Plots</span></div>
<div class="bt" style="left:878.7px;width:45.299999999999955px"><span class="t" style="letter-spacing:0.11px;left:3.6px;top:1.6px">History</span></div>
</div>
<div id="status" class="abs">
<svg style="left:746px;top:6px" width="16" height="16" viewBox="0 0 16 16"><path d="M4.4 3.4 L1.4 6.3 L4.4 9.2 M7.8 3.4 L10.8 6.3 L9.6 7.5" fill="none" stroke="#e6eaed" stroke-width="1.4"/><path d="M4.8 11.4 L7.6 14.2 L14.2 7.8" fill="none" stroke="#e6eaed" stroke-width="1.5"/></svg>
<span class="t" style="letter-spacing:-0.13px;left:769px;top:5.5px">LSP Python: ready</span>
<svg style="left:905px;top:6px" width="16" height="16" viewBox="0 0 16 16"><path d="M7.6 2.6 L13 5.6 V11.6 L7.6 14.6 L2.2 11.6 V5.6Z M2.2 5.6 L7.6 8.6 L13 5.6 M7.6 8.6 V14.6" fill="none" stroke="#e6eaed" stroke-width="1.4" stroke-linejoin="round"/></svg>
<span class="t" style="letter-spacing:0.05px;left:929px;top:5.5px">conda: base (Python 3.8.5)</span>
<span class="t" style="letter-spacing:-0.14px;left:1113.3px;top:5.5px">Line 1, Col 1</span>
<span class="t" style="letter-spacing:-0.50px;left:1217.5px;top:5.5px">UTF-8</span>
<span class="t" style="letter-spacing:-0.80px;left:1289.5px;top:5.5px">CRLF</span>
<span class="t" style="letter-spacing:-0.18px;left:1355.8px;top:5.5px">RW</span>
<span class="t" style="left:1417.6px;top:5.5px">Mem</span>
</div>
<div id="stripe" class="abs"></div>
<div class="abs" style="left:1423.4px;top:775.2px;width:70px;height:34.4px;background:#2c2d2b"></div>
<div class="abs" style="left:1457.8px;top:775.2px;width:1px;height:34.4px;background:#222321"></div>
<svg style="left:1423px;top:775px" width="72" height="35" viewBox="1423 775 72 35"><rect x="1432.6" y="785.7" width="5.6" height="15.3" fill="#b6b7b5"/><rect x="1442.9" y="785.7" width="5.6" height="15.3" fill="#b6b7b5"/><rect x="1466.6" y="786.6" width="19.6" height="14.2" fill="none" stroke="#b6b7b5" stroke-width="1.6"/><ellipse cx="1476.6" cy="792.2" rx="2.3" ry="2.9" fill="#b6b7b5"/><path d="M1470.4 800.6 q0.4 -2.6 4.6 -3.6 v-2.4 h3.2 v2.4 q4.2 1 4.6 3.6z" fill="#b6b7b5"/></svg>
<svg style="left:138.5px;top:216.5px" width="13.8" height="20.7" viewBox="0 0 12 18"><path d="M0 0 V14.5 L3.4 11.4 L5.9 17 L8.2 16 L5.7 10.5 H10.3Z" fill="#fff" stroke="#111" stroke-width="1"/></svg>
<svg style="left:1361px;top:641.5px" width="13.8" height="20.7" viewBox="0 0 12 18"><path d="M0 0 V14.5 L3.4 11.4 L5.9 17 L8.2 16 L5.7 10.5 H10.3Z" fill="#fff" stroke="#111" stroke-width="1"/></svg>
</div>
</body>
</html>
